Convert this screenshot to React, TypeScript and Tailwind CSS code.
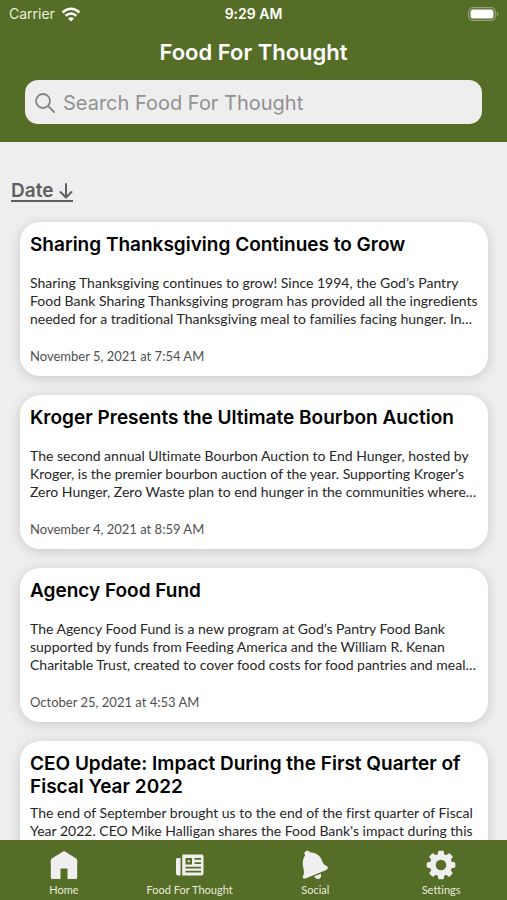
import React from "react";

type Article = { title: string; body: string; date: string };

const articles: Article[] = [
  {
    title: "Sharing Thanksgiving Continues to Grow",
    body: "Sharing Thanksgiving continues to grow! Since 1994, the God’s Pantry\nFood Bank Sharing Thanksgiving program has provided all the ingredients\nneeded for a traditional Thanksgiving meal to families facing hunger. In…",
    date: "November 5, 2021 at 7:54 AM",
  },
  {
    title: "Kroger Presents the Ultimate Bourbon Auction",
    body: "The second annual Ultimate Bourbon Auction to End Hunger, hosted by\nKroger, is the premier bourbon auction of the year. Supporting Kroger's\nZero Hunger, Zero Waste plan to end hunger in the communities where…",
    date: "November 4, 2021 at 8:59 AM",
  },
  {
    title: "Agency Food Fund",
    body: "The Agency Food Fund is a new program at God’s Pantry Food Bank\nsupported by funds from Feeding America and the William R. Kenan\nCharitable Trust, created to cover food costs for food pantries and meal…",
    date: "October 25, 2021 at 4:53 AM",
  },
  {
    title: "CEO Update: Impact During the First Quarter of Fiscal Year 2022",
    body: "The end of September brought us to the end of the first quarter of Fiscal\nYear 2022. CEO Mike Halligan shares the Food Bank's impact during this",
    date: "",
  },
];

const iconClass = "h-[30px] w-[30px] text-[#efefef]";

function HomeIcon() {
  return (
    <svg viewBox="0 0 30 30" className={iconClass} fill="currentColor" aria-hidden="true">
      <path d="M14.1 1.4a2 2 0 0 1 1.9 0L27.2 8.4q1 .7 1 2V27.500q0 1.500-1.500 1.500H18.500V18.500H11.500V29H3.300q-1.500 0-1.500-1.500V10.400q0-1.300 1-2Z" />
    </svg>
  );
}

function NewsIcon() {
  return (
    <svg viewBox="0 0 30 30" className={iconClass} fill="currentColor" aria-hidden="true">
      <path d="M1 9.500q0-1.500 1.500-1.500H5.500V25.500H3.500Q1 25.500 1 23Z" />
      <path
        fillRule="evenodd"
        d="M8.500 4.500H27q1.500 0 1.500 1.500V23q0 2.500-2.500 2.500H7.200V5.900Q7.200 4.500 8.500 4.500ZM10.500 8V14.500H17V8ZM12.800 10.200H14.700V12.300H12.800ZM19.500 8V9.800H26V8ZM19.500 12.200V14H26V12.200ZM10.500 16.700V18.500H26V16.700ZM10.500 20.800V22.600H26V20.800Z"
      />
    </svg>
  );
}

function BellIcon() {
  return (
    <svg viewBox="0 0 30 30" className={iconClass} fill="currentColor" aria-hidden="true">
      <path d="M4.400 3.900C4.200 1.600 6.800 0 9 1.300L10 2.200C15.500 2.500 20 5.300 21.600 9.400C22.800 12.600 23.200 14.300 26.300 15.800C28.800 17.200 28 19.200 26.200 20L6 28.300C3.500 29.300 2 27.700 3.200 25.700C4.800 22.600 3.600 20 3 16.200C2.200 12 3.200 7.600 5.200 5.200Z" />
      <path d="M14.200 26.300L20.800 23.700C22.500 29 16 31.300 14.200 26.300Z" />
    </svg>
  );
}

function GearIcon() {
  return (
    <svg viewBox="0 0 30 30" className={iconClass} aria-hidden="true">
      <circle cx="15" cy="15" r="8.200" fill="none" stroke="currentColor" strokeWidth="5.800" />
      {[0, 45, 90, 135, 180, 225, 270, 315].map((angle) => (
        <path
          key={angle}
          d="M11.500 6 12.200 1.600Q12.400.7 13.400.7H16.600Q17.600.7 17.800 1.600L18.500 6Z"
          fill="currentColor"
          transform={`rotate(${angle} 15 15)`}
        />
      ))}
    </svg>
  );
}

const tabs = [
  { label: "Home", Icon: HomeIcon },
  { label: "Food For Thought", Icon: NewsIcon },
  { label: "Social", Icon: BellIcon },
  { label: "Settings", Icon: GearIcon },
];

function StatusBar() {
  return (
    <div className="grid h-7 grid-cols-3 items-center px-2 text-sm">
      <div className="flex items-center gap-1.5 pl-px">
        <span className="text-[#e9f0dc]">Carrier</span>
        <svg viewBox="0 0 20 15" className="h-[15px] w-5" aria-label="Wi-Fi">
          <g fill="none" stroke="white" strokeWidth="2.600">
            <path d="M1.500 5.500Q10-2 18.500 5.500" />
            <path d="M4.600 8.800Q10 4.200 15.400 8.800" />
          </g>
          <path d="M7 11.500Q10 9 13 11.500L10 14.500Z" fill="white" />
        </svg>
      </div>
      <span className="text-center font-semibold">9:29 AM</span>
      <svg viewBox="0 0 31 14" className="h-[14px] w-[31px] justify-self-end" aria-label="Battery full">
        <rect x=".7" y=".7" width="26.600" height="12.600" rx="4" fill="none" stroke="#94a474" strokeWidth="1.200" />
        <rect x="2.500" y="2.500" width="23" height="9" rx="2.200" fill="white" />
        <path d="M28.800 4.700Q30.500 5.500 30.500 7T28.800 9.300Z" fill="#94a474" />
      </svg>
    </div>
  );
}

function ArticleCard({ title, body, date }: Article) {
  return (
    <article className="min-h-[154px] shrink-0 rounded-[20px] bg-white px-[10px] py-[11px] shadow-[0_2px_12px_rgba(0,0,0,0.16)]">
      <h2 className="mb-1.5 min-h-[35px] font-['Inter',sans-serif] text-[19px] leading-[23px] font-semibold text-black">
        {title}
      </h2>
      <p className="text-sm leading-[18px] whitespace-pre-line text-[#262626]">{body}</p>
      {date && <time className="mt-[19px] block text-[13px] leading-[18px] text-[#505050]">{date}</time>}
    </article>
  );
}

export default function App() {
  return (
    <div className="flex h-screen flex-col overflow-hidden bg-[#eeeeee] font-['Lato',sans-serif] [font-variant-ligatures:none]">
      <header className="shrink-0 bg-[#566d27] pb-[18px] font-['Inter',sans-serif] text-white">
        <StatusBar />
        <h1 className="pt-2 text-center text-[22px] leading-8 font-semibold">Food For Thought</h1>
        <label className="mx-[25px] mt-3 flex h-11 items-center gap-2 rounded-[13px] bg-[#eeeeee] px-[10px] pt-px">
          <svg viewBox="0 0 20 20" className="h-5 w-5 shrink-0" fill="none" stroke="#858585" strokeWidth="1.800" strokeLinecap="round" aria-hidden="true">
            <circle cx="8" cy="8" r="7" />
            <path d="M13.200 13.200 19 19" />
          </svg>
          <input
            type="search"
            aria-label="Search Food For Thought"
            placeholder="Search Food For Thought"
            className="min-w-0 flex-1 bg-transparent text-[20px] text-black outline-none placeholder:text-[#919191]"
          />
        </label>
      </header>

      <main className="flex min-h-0 flex-1 flex-col overflow-hidden pt-10">
        <button
          type="button"
          className="ml-[11px] flex items-center gap-1.5 self-start border-b-2 border-[#5f5f5f] font-['Inter',sans-serif] text-[19px] leading-[18px] font-semibold text-[#5f5f5f]"
        >
          Date
          <svg viewBox="0 0 14 16" className="h-4 w-[14px]" fill="none" stroke="currentColor" strokeWidth="2" strokeLinecap="round" strokeLinejoin="round" aria-hidden="true">
            <path d="M7 1V14.500M1.500 9 7 14.500 12.500 9" />
          </svg>
        </button>
        <div className="mt-5 flex flex-col gap-[19px] pr-[19px] pl-5">
          {articles.map((article) => (
            <ArticleCard key={article.title} {...article} />
          ))}
        </div>
      </main>

      <nav className="relative grid h-[60px] shrink-0 grid-cols-4 bg-[#566d27] pr-[3px] pl-px">
        {tabs.map(({ label, Icon }) => (
          <button key={label} type="button" className="flex flex-col items-center pt-[10px] text-[11px] leading-5 text-[#e6ebdc]">
            <Icon />
            {label}
          </button>
        ))}
      </nav>
    </div>
  );
}
